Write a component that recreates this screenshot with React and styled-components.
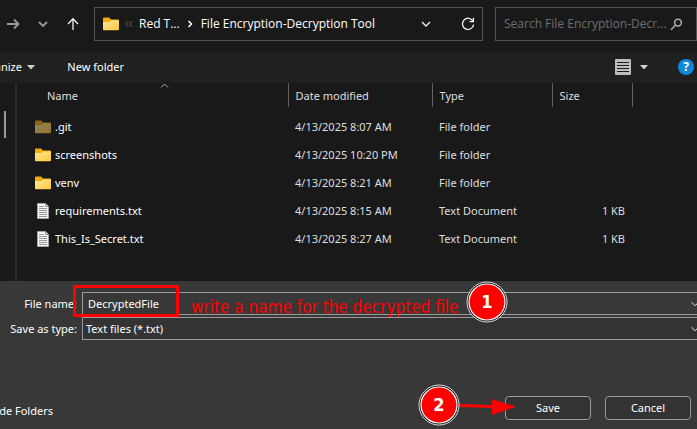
import React from "react";
import styled, { createGlobalStyle } from "styled-components";

const Global = createGlobalStyle`
  *, *::before, *::after { box-sizing: border-box; }
  body { margin: 0; background: #383838; color: #fff; }
  body, button, input, select { font-family: "Noto Sans", "Open Sans", sans-serif; font-size: 11px; line-height: 16px; }
  svg { flex: none; }
`;

const Dialog = styled.main`
  display: flex;
  flex-direction: column;
  min-height: 100vh;
  overflow: hidden;
  background: #383838;
`;

const NavBar = styled.nav`
  display: flex;
  align-items: center;
  gap: 12px;
  padding: 7px 0 11px;
  background: #191919;
`;

const NavButtons = styled.div`
  display: flex;
  gap: 10px;
  padding-left: 3px;
  width: 82px;
`;

const IconButton = styled.button`
  display: flex;
  align-items: center;
  justify-content: center;
  flex: none;
  width: 20px;
  height: 20px;
  padding: 0;
  border: 0;
  background: none;
  color: ${(p) => (p.$dim ? "#9a9a9a" : "#f2f2f2")};
`;

const AddressBar = styled.div`
  display: flex;
  align-items: center;
  flex: 1;
  min-width: 0;
  height: 34px;
  padding: 0 4px 0 8px;
  border: 1px solid #535353;
`;

const Crumbs = styled.div`
  display: flex;
  align-items: center;
  flex: 1;
  min-width: 0;
  white-space: nowrap;
`;

const Crumb = styled.a`
  color: #fff;
  font-family: "Open Sans", sans-serif;
  font-size: 12px;
  text-decoration: none;
`;

const CrumbIcon = styled.span`
  display: flex;
  justify-content: center;
  flex: none;
  width: ${(p) => p.$width}px;
`;

const AddressActions = styled.div`
  display: flex;
  gap: 22px;
`;

const SearchBox = styled.label`
  display: flex;
  align-items: center;
  flex: none;
  width: 202px;
  height: 34px;
  padding: 0 13px 0 8px;
  border: 1px solid #535353;
`;

const SearchInput = styled.input`
  flex: 1;
  min-width: 0;
  padding: 0;
  border: 0;
  outline: 0;
  background: none;
  color: #fff;
  font-family: "Open Sans", sans-serif;
  font-size: 12px;
  &::placeholder { color: #6e6e6e; opacity: 1; }
`;

const Toolbar = styled.div`
  display: flex;
  align-items: center;
  height: 30px;
  background: #202020;
`;

const ToolButton = styled.button`
  display: flex;
  align-items: center;
  justify-content: flex-end;
  gap: 5px;
  width: ${(p) => p.$width};
  padding: 0;
  border: 0;
  overflow: hidden;
  white-space: nowrap;
  background: none;
  color: #fff;
`;

const ToolbarEnd = styled.div`
  display: flex;
  align-items: center;
  gap: 26px;
  margin-left: auto;
  padding-right: 3px;
`;

const HelpButton = styled.button`
  width: 16px;
  height: 16px;
  padding: 0;
  border: 0;
  border-radius: 50%;
  background: #0f88dc;
  color: #fff;
  font-size: 12px;
  font-weight: 700;
`;

const Browser = styled.section`
  display: flex;
  height: 199px;
  background: #191919;
  border-top: 1px solid #1c1c1c;
`;

const TreePane = styled.aside`
  flex: none;
  width: 17px;
  padding: 28px 0 0 4px;
  border-right: 2px solid #2b2b2b;
`;

const ScrollThumb = styled.div`
  width: 2px;
  height: 27px;
  background: #9a9a9a;
`;

const Files = styled.table`
  flex: 1;
  width: 100%;
  align-self: flex-start;
  table-layout: fixed;
  border-collapse: collapse;
  color: #dedede;
`;

const HeadCell = styled.th`
  position: relative;
  width: ${(p) => p.$width};
  height: 24px;
  padding: 2px 0 0 ${(p) => p.$pad || 7}px;
  border-right: ${(p) => (p.$last ? "0" : "1px solid #636363")};
  text-align: left;
  font-weight: 400;
`;

const SortMark = styled.svg`
  position: absolute;
  top: 0;
  left: 143px;
`;

const Body = styled.tbody`
  &::before { content: ""; display: block; height: 6px; }
`;

const Cell = styled.td`
  height: 28px;
  padding: 0 7px;
  text-align: ${(p) => (p.$end ? "right" : "left")};
  white-space: nowrap;
`;

const FileLabel = styled.span`
  display: flex;
  align-items: center;
  gap: 4px;
  padding-left: 11px;
  color: #fff;
`;

const SavePanel = styled.form`
  position: relative;
  display: flex;
  flex-direction: column;
  flex: 1;
  padding-top: 11px;
`;

const Fields = styled.div`
  display: grid;
  grid-template-columns: 77px 1fr;
  column-gap: 5px;
  row-gap: 2px;
  align-items: center;
  margin-right: -8px;
`;

const FieldLabel = styled.label`
  text-align: right;
  white-space: nowrap;
`;

const FieldBox = styled.div`
  display: flex;
  align-items: center;
  height: 23px;
  padding: 0 2px 0 ${(p) => p.$pad}px;
  border: 1px solid #9b9b9b;
  background: ${(p) => p.$fill};
`;

const NameInput = styled.input`
  flex: 1;
  min-width: 0;
  padding: 0;
  border: 0;
  outline: 0;
  background: none;
  color: #fff;
`;

const TypeSelect = styled.select`
  flex: 1;
  min-width: 0;
  padding: 0;
  border: 0;
  outline: 0;
  appearance: none;
  background: none;
  color: #fff;
`;

const Footer = styled.div`
  display: flex;
  align-items: center;
  gap: 14px;
  margin-top: auto;
  padding: 0 6px 9px 0;
`;

const FolderToggle = styled.button`
  display: flex;
  justify-content: flex-end;
  width: 53px;
  margin: 6px auto 0 0;
  padding: 0;
  border: 0;
  overflow: hidden;
  white-space: nowrap;
  background: none;
  color: #fff;
`;

const ActionButton = styled.button`
  position: relative;
  width: 86px;
  height: 24px;
  padding: 0;
  border: 1px solid #9b9b9b;
  border-radius: 4px;
  background: #333;
  color: #fff;
`;

const Highlight = styled.div`
  position: absolute;
  top: 4px;
  left: 73px;
  width: 106px;
  height: 32px;
  border: 3px solid #f00;
  pointer-events: none;
`;

const Note = styled.div`
  position: absolute;
  top: 16px;
  left: 191px;
  color: #f00;
  font-family: "DejaVu Sans Condensed", "DejaVu Sans", Verdana, sans-serif;
  font-size: 17px;
  line-height: 20px;
  white-space: nowrap;
  pointer-events: none;
`;

const StepBadge = styled.svg`
  position: absolute;
  top: 0;
  left: 466px;
`;

const SaveStep = styled.svg`
  position: absolute;
  right: 74px;
  top: -13px;
  pointer-events: none;
`;

const BadgeText = styled.text`
  font-family: "DejaVu Sans Condensed", "DejaVu Sans", Verdana, sans-serif;
  font-size: 18px;
  font-weight: 700;
  fill: #fff;
  text-anchor: middle;
`;

function Icon({ d, size = 16, width = 1.3 }) {
  return (
    <svg width={size} height={size} viewBox="0 0 16 16" fill="none" stroke="currentColor" strokeWidth={width} aria-hidden="true">
      <path d={d} />
    </svg>
  );
}

function Folder({ faded }) {
  return (
    <svg width="16" height="14" viewBox="0 0 16 14" opacity={faded ? 0.52 : 1} aria-hidden="true">
      <defs>
        <linearGradient id="folder" x1="0" y1="0" x2="1" y2="1">
          <stop offset="0" stopColor="#ffe79d" />
          <stop offset="1" stopColor="#ffc938" />
        </linearGradient>
      </defs>
      <path d="M0 1.5Q0 .5 1 .5H6L8 2.5H15Q16 2.5 16 3.5V9H0Z" fill="#f5ab0b" />
      <path d="M0 5H6.5L8.3 3.3H16V12.5Q16 13.3 15.2 13.3H.8Q0 13.3 0 12.5Z" fill="url(#folder)" />
    </svg>
  );
}

function Doc() {
  return (
    <svg width="16" height="16" viewBox="0 0 16 16" aria-hidden="true">
      <path d="M2.5.5H10.5L13.5 3.5V15.5H2.5Z" fill="#f8f8f8" stroke="#a2a2a2" />
      <path d="M10.5.5V3.5H13.5" fill="#ddd" stroke="#8d8d8d" />
      <path d="M4 3.5H9M4 5.5H12M4 7.5H12M4 9.5H12M4 11.5H12M4 13.5H12" stroke="#989898" />
    </svg>
  );
}

function Caret() {
  return (
    <svg width="8" height="5" viewBox="0 0 8 5" aria-hidden="true">
      <path d="M0 0H8L4 4.5Z" fill="#d0d0d0" />
    </svg>
  );
}

function Badge({ n }) {
  return (
    <>
      <circle cx="21" cy="21" r="20" fill="#111" stroke="#ddd" />
      <circle cx="21" cy="21" r="18" fill="#f00" stroke="#fff" strokeWidth="1.2" />
      <BadgeText x="21" y="27">{n}</BadgeText>
    </>
  );
}

const files = [
  { name: ".git", date: "4/13/2025 8:07 AM", type: "File folder", faded: true },
  { name: "screenshots", date: "4/13/2025 10:20 PM", type: "File folder" },
  { name: "venv", date: "4/13/2025 8:21 AM", type: "File folder" },
  { name: "requirements.txt", date: "4/13/2025 8:15 AM", type: "Text Document", size: "1 KB" },
  { name: "This_Is_Secret.txt", date: "4/13/2025 8:27 AM", type: "Text Document", size: "1 KB" },
];

const chevronDown = "M4 6L8 10L12 6";

export default function App() {
  return (
    <Dialog>
      <Global />
      <NavBar>
        <NavButtons>
          <IconButton $dim aria-label="Forward"><Icon width={1.8} d="M2 8H13.5M9 3.5L13.5 8L9 12.5" /></IconButton>
          <IconButton $dim aria-label="Recent locations"><Icon width={1.8} d={chevronDown} /></IconButton>
          <IconButton aria-label="Up"><Icon d="M8 14V3M3 8L8 2.8L13 8" /></IconButton>
        </NavButtons>
        <AddressBar>
          <Crumbs>
            <Folder />
            <CrumbIcon $width={20}>
              <svg width="10" height="8" viewBox="0 0 10 8" fill="none" stroke="#666"><path d="M4.5 1L1.5 4L4.5 7M8.5 1L5.5 4L8.5 7" /></svg>
            </CrumbIcon>
            <Crumb href="#parent">Red T...</Crumb>
            <CrumbIcon $width={21}>
              <svg width="6" height="8" viewBox="0 0 6 8" fill="none" stroke="#fff" strokeWidth="1.5"><path d="M1.5 1L4.5 4L1.5 7" /></svg>
            </CrumbIcon>
            <Crumb href="#current">File Encryption-Decryption Tool</Crumb>
          </Crumbs>
          <AddressActions>
            <IconButton aria-label="Previous locations"><Icon d={chevronDown} /></IconButton>
            <IconButton aria-label="Refresh"><Icon d="M13 5.2A5.6 5.6 0 1 0 13.6 8.6M13.4 1.8V5.6H9.6" /></IconButton>
          </AddressActions>
        </AddressBar>
        <SearchBox>
          <SearchInput aria-label="Search" placeholder="Search File Encryption-Decr..." />
          <svg width="13" height="13" viewBox="0 0 13 13" fill="none" stroke="#b0b0b0" strokeWidth="1.5" aria-hidden="true">
            <circle cx="8" cy="4.6" r="3.4" /><path d="M5.6 7L1 11.8" />
          </svg>
        </SearchBox>
      </NavBar>

      <Toolbar>
        <ToolButton $width="35px">Organize <Caret /></ToolButton>
        <ToolButton $width="89px">New folder</ToolButton>
        <ToolbarEnd>
          <ToolButton aria-label="Change view">
            <svg width="16" height="16" viewBox="0 0 16 16" aria-hidden="true">
              <rect width="16" height="16" rx="1" fill="#bdbdbd" />
              <path d="M2 3.5H14M2 6.5H14M2 9.5H14M2 12.5H14" stroke="#1c1c1c" />
            </svg>
            <CrumbIcon $width={16}><Caret /></CrumbIcon>
          </ToolButton>
          <HelpButton aria-label="Help">?</HelpButton>
        </ToolbarEnd>
      </Toolbar>

      <Browser>
        <TreePane><ScrollThumb /></TreePane>
        <Files>
          <thead>
            <tr>
              <HeadCell $width="271px" $pad={30}>
                Name
                <SortMark width="9" height="5" viewBox="0 0 9 5" fill="none" stroke="#aaa"><path d="M1 4.5L4.5 1L8 4.5" /></SortMark>
              </HeadCell>
              <HeadCell $width="144px">Date modified</HeadCell>
              <HeadCell $width="120px">Type</HeadCell>
              <HeadCell $width="80px">Size</HeadCell>
              <HeadCell $last aria-label="More columns" />
            </tr>
          </thead>
          <Body>
            {files.map((f) => (
              <tr key={f.name}>
                <Cell><FileLabel>{f.size ? <Doc /> : <Folder faded={f.faded} />}{f.name}</FileLabel></Cell>
                <Cell>{f.date}</Cell>
                <Cell>{f.type}</Cell>
                <Cell $end>{f.size}</Cell>
                <Cell />
              </tr>
            ))}
          </Body>
        </Files>
      </Browser>

      <SavePanel onSubmit={(e) => e.preventDefault()}>
        <Fields>
          <FieldLabel htmlFor="name">File name:</FieldLabel>
          <FieldBox $pad={5} $fill="#383838">
            <NameInput id="name" defaultValue="DecryptedFile" />
            <Icon size={14} width={1} d={chevronDown} />
          </FieldBox>
          <FieldLabel htmlFor="type">Save as type:</FieldLabel>
          <FieldBox $pad={3} $fill="#333">
            <TypeSelect id="type"><option>Text files (*.txt)</option></TypeSelect>
            <Icon size={14} width={1} d={chevronDown} />
          </FieldBox>
        </Fields>
        <Footer>
          <FolderToggle type="button">Hide Folders</FolderToggle>
          <ActionButton type="submit">
            Save
            <SaveStep width="98" height="42" viewBox="0 0 98 42" aria-hidden="true">
              <path d="M41 21.5L76 22.5" stroke="#f00" strokeWidth="3" />
              <path d="M74 15L98 22.8L74 31Z" fill="#f00" />
              <Badge n="2" />
            </SaveStep>
          </ActionButton>
          <ActionButton type="button">Cancel</ActionButton>
        </Footer>
        <Highlight />
        <Note>write a name for the decrypted file</Note>
        <StepBadge width="42" height="42" viewBox="0 0 42 42" aria-hidden="true"><Badge n="1" /></StepBadge>
      </SavePanel>
    </Dialog>
  );
}
